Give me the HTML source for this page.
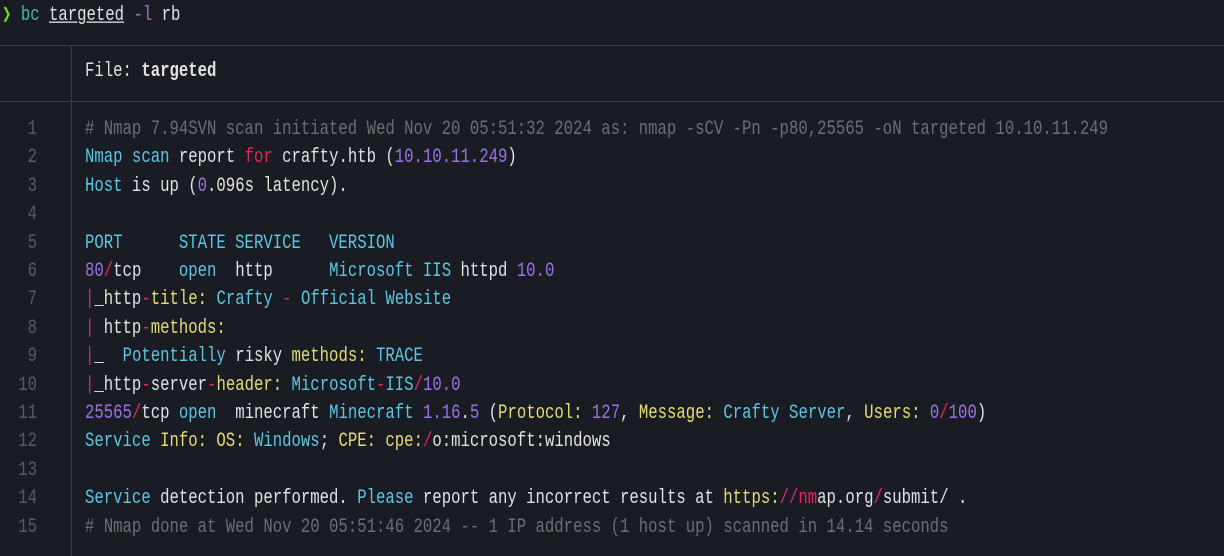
<!DOCTYPE html>
<html><head><meta charset="utf-8"><style>
html,body{margin:0;padding:0;background:#1a1c23;width:1224px;height:556px;overflow:hidden}
body{font-family:"Liberation Mono","DejaVu Sans Mono",monospace;font-size:15.65px;color:#e2e2e2;position:relative}
.t{position:absolute;white-space:pre;line-height:20px;transform:scaleY(1.3);transform-origin:left center}
.hl{position:absolute;left:0;width:1224px;height:1px;background:#3a3c44}
.vl{position:absolute;left:71px;top:46px;width:1px;height:510px;background:#3a3c44}
.n{position:absolute;width:37px;text-align:right;left:0;color:#5a5c62;line-height:20px;transform:scaleY(1.3)}
.c{color:#5ec6e2}.p{color:#e8245f}.y{color:#e6dc76}.v{color:#9d72e6}.g{color:#6d6e70}.w{color:#e2e2e2}
</style></head><body>
<div class="t" style="left:2px;top:5px"><span style="color:#7ed321">❯</span> <span style="color:#48b8a6">bc</span> <span style="text-decoration:underline">targeted</span> <span style="color:#a86ad0">-l</span> rb</div>
<div class="hl" style="top:45px"></div>
<div class="hl" style="top:101px"></div>
<div class="vl"></div>
<div class="t" style="left:85px;top:61px">File: <b>targeted</b></div>
<div class="n" style="top:119px">1</div>
<div class="n" style="top:147px">2</div>
<div class="n" style="top:176px">3</div>
<div class="n" style="top:204px">4</div>
<div class="n" style="top:233px">5</div>
<div class="n" style="top:261px">6</div>
<div class="n" style="top:289px">7</div>
<div class="n" style="top:318px">8</div>
<div class="n" style="top:346px">9</div>
<div class="n" style="top:375px">10</div>
<div class="n" style="top:403px">11</div>
<div class="n" style="top:431px">12</div>
<div class="n" style="top:460px">13</div>
<div class="n" style="top:488px">14</div>
<div class="n" style="top:517px">15</div>
<div class="t g" style="left:85px;top:119px"># Nmap 7.94SVN scan initiated Wed Nov 20 05:51:32 2024 as: nmap -sCV -Pn -p80,25565 -oN targeted 10.10.11.249</div>
<div class="t" style="left:85px;top:147px"><span class="c">Nmap scan</span> report <span class="p">for</span> crafty.htb (<span class="v">10.10.11.249</span>)</div>
<div class="t" style="left:85px;top:176px"><span class="c">Host</span> is up (<span class="v">0</span>.096s latency).</div>
<div class="t c" style="left:85px;top:233px">PORT      STATE SERVICE   VERSION</div>
<div class="t" style="left:85px;top:261px"><span class="v">80</span><span class="p">/</span>tcp    <span class="c">open</span>  http      <span class="c">Microsoft IIS</span> httpd <span class="v">10.0</span></div>
<div class="t" style="left:85px;top:289px"><span class="p">|</span>_http<span class="p">-</span><span class="y">title:</span> <span class="c">Crafty</span> <span class="p">-</span> <span class="c">Official Website</span></div>
<div class="t" style="left:85px;top:318px"><span class="p">|</span> http<span class="p">-</span><span class="y">methods:</span></div>
<div class="t" style="left:85px;top:346px"><span class="p">|</span>_  <span class="c">Potentially</span> risky <span class="y">methods:</span> <span class="c">TRACE</span></div>
<div class="t" style="left:85px;top:375px"><span class="p">|</span>_http<span class="p">-</span>server<span class="p">-</span><span class="y">header:</span> <span class="c">Microsoft</span><span class="p">-</span><span class="c">IIS</span><span class="p">/</span><span class="v">10.0</span></div>
<div class="t" style="left:85px;top:403px"><span class="v">25565</span><span class="p">/</span>tcp <span class="c">open</span>  minecraft <span class="c">Minecraft</span> <span class="v">1.16</span>.<span class="v">5</span> (<span class="y">Protocol:</span> <span class="v">127</span>, <span class="y">Message:</span> <span class="c">Crafty Server</span>, <span class="y">Users:</span> <span class="v">0</span><span class="p">/</span><span class="v">100</span>)</div>
<div class="t" style="left:85px;top:431px"><span class="c">Service</span> <span class="y">Info:</span> <span class="y">OS:</span> <span class="c">Windows</span>; <span class="y">CPE:</span> <span class="y">cpe:</span><span class="p">/</span>o:microsoft:windows</div>
<div class="t" style="left:85px;top:488px"><span class="c">Service</span> detection performed. <span class="c">Please</span> report any incorrect results at <span class="y">https:</span><span class="p">//nm</span>ap.org<span class="p">/</span>submit/ .</div>
<div class="t g" style="left:85px;top:517px"># Nmap done at Wed Nov 20 05:51:46 2024 -- 1 IP address (1 host up) scanned in 14.14 seconds</div>
</body></html>
